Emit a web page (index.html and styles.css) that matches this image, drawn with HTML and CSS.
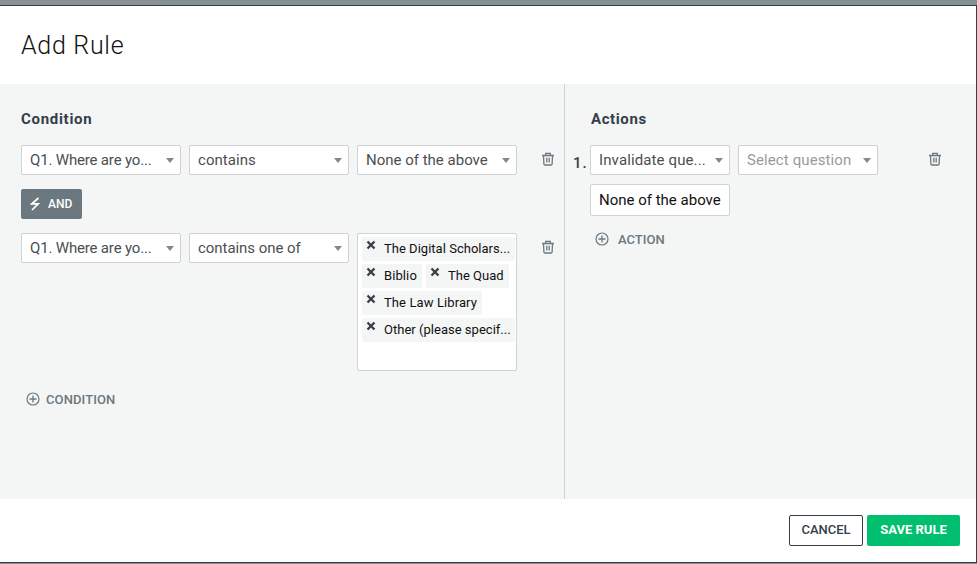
FILE: index.html
```html
<!DOCTYPE html>
<html lang="en">
<head>
<meta charset="utf-8">
<title>Add Rule</title>
<link rel="stylesheet" href="styles.css">
</head>
<body>
<svg class="symbols" width="0" height="0">
  <symbol id="trash" viewBox="0 0 14 14"><path d="M1 3.5H13M4.7 3.2V1.3H9.3V3.2M2.5 3.8L2.9 12Q3 13 4 13H10Q11 13 11.1 12L11.5 3.8M5.8 5.8V10.5M8.2 5.8V10.5" fill="none" stroke="currentColor" stroke-width="1.3"/></symbol>
  <symbol id="plus" viewBox="0 0 14 14"><path d="M7 3.5V10.5M3.5 7H10.5" fill="none" stroke="currentColor" stroke-width="1.3"/><circle cx="7" cy="7" r="6" fill="none" stroke="currentColor" stroke-width="1.2"/></symbol>
  <symbol id="cross" viewBox="0 0 10 10"><path d="M1.5 1.5L8.5 8.5M8.5 1.5L1.5 8.5" fill="none" stroke="currentColor" stroke-width="2.3"/></symbol>
</svg>
<div class="backdrop"><div class="backdrop-side"></div></div>
<div class="dialog">
  <header class="header"><h1 class="title">Add Rule</h1></header>
  <main class="body">
    <section class="conditions">
      <h2 class="heading"><span class="t-condition">Condition</span></h2>
      <div class="row">
        <div class="select"><span class="t-where">Q1. Where are yo...</span><i class="caret"></i></div>
        <div class="select"><span class="t-contains">contains</span><i class="caret"></i></div>
        <div class="select"><span class="t-none">None of the above</span><i class="caret"></i></div>
        <svg class="trash"><use href="#trash"/></svg>
      </div>
      <button class="and"><svg class="bolt" viewBox="0 0 10 14"><path d="M8.5 1L1.8 6.8H8.2L2 13" fill="none" stroke="currentColor" stroke-width="1.7"/></svg><span class="t-and">AND</span></button>
      <div class="row">
        <div class="select"><span class="t-where">Q1. Where are yo...</span><i class="caret"></i></div>
        <div class="select"><span class="t-oneof">contains one of</span><i class="caret"></i></div>
        <div class="multi">
          <div class="tag tag-full"><svg class="cross"><use href="#cross"/></svg><span class="t-digital">The Digital Scholars...</span></div>
          <div class="tag tag-biblio"><svg class="cross"><use href="#cross"/></svg><span class="t-biblio">Biblio</span></div>
          <div class="tag tag-quad"><svg class="cross"><use href="#cross"/></svg><span class="t-quad">The Quad</span></div>
          <div class="tag tag-law"><svg class="cross"><use href="#cross"/></svg><span class="t-law">The Law Library</span></div>
          <div class="tag tag-full"><svg class="cross"><use href="#cross"/></svg><span class="t-other">Other (please specif...</span></div>
        </div>
        <svg class="trash"><use href="#trash"/></svg>
      </div>
      <button class="add"><svg class="plus"><use href="#plus"/></svg><span class="t-addcond">CONDITION</span></button>
    </section>
    <section class="actions">
      <h2 class="heading"><span class="t-actions">Actions</span></h2>
      <div class="action">
        <span class="number">1.</span>
        <div class="fields">
          <div class="row">
            <div class="select short"><span class="t-invalidate">Invalidate que...</span><i class="caret"></i></div>
            <div class="select short placeholder"><span class="t-select">Select question</span><i class="caret"></i></div>
            <svg class="trash trash-action"><use href="#trash"/></svg>
          </div>
          <div class="value"><span class="t-value">None of the above</span></div>
          <button class="add add-action"><svg class="plus"><use href="#plus"/></svg><span class="t-addact">ACTION</span></button>
        </div>
      </div>
    </section>
  </main>
  <footer class="footer">
    <button class="cancel"><span class="t-cancel">CANCEL</span></button>
    <button class="save"><span class="t-save">SAVE RULE</span></button>
  </footer>
</div>
</body>
</html>
```
FILE: styles.css
```css
* { box-sizing: border-box; }
body { margin: 0; width: 977px; height: 564px; overflow: hidden; background: #849093; font-family: Roboto, sans-serif; font-size: 15px; color: #4b4f52; }
button { font: inherit; border: 0; background: none; padding: 0; display: flex; align-items: center; }
span { white-space: nowrap; }
svg { display: block; flex: none; }
.symbols { display: none; }
.backdrop { height: 5px; }
.backdrop-side { width: 160px; height: 5px; background: #8a8f98; }
.dialog { height: 558px; border: 1px solid #333e48; border-left: 0; background: #fff; }
.header { height: 78px; padding: 23px 0 0 21px; }
.title { margin: 0; font-size: 25px; line-height: 34px; font-weight: 300; color: #111; letter-spacing: 0.7px; }
.body { display: flex; height: 415px; background: #f4f5f5; }
.conditions { width: 565px; border-right: 1px solid #d0d2d3; padding: 25px 0 0 21px; }
.actions { flex: 1; padding: 25px 0 0 8px; }
.heading { margin: 0 0 16px; font-size: 15px; line-height: 20px; font-weight: 700; color: #333e48; }
.actions .heading { padding-left: 18px; }
.row { display: flex; gap: 8px; }
.select { width: 160px; height: 30px; display: flex; align-items: center; justify-content: space-between; padding: 0 6px 0 8px; background: #fff; border: 1px solid #d0d2d3; border-radius: 2px; }
.select.short { width: 140px; }
.placeholder { color: #999b9b; }
.caret { border: 4px solid transparent; border-top: 5px solid #888; border-bottom: 0; }
.trash { width: 14px; height: 14px; margin: 7px 0 0 16px; color: #6b787f; }
.trash-action { margin-left: 42px; }
.and { width: 61px; height: 30px; margin: 14px 0; padding-left: 9px; gap: 8px; border-radius: 2px; background: #6b787f; color: #fff; font-size: 12px; font-weight: 500; }
.bolt { width: 10px; height: 14px; }
.multi { width: 160px; height: 138px; padding: 3px 1px 0 4px; display: flex; flex-wrap: wrap; align-content: flex-start; gap: 3px 4px; background: #fff; border: 1px solid #d0d2d3; border-radius: 2px; }
.tag { height: 24px; display: flex; padding: 3px 0 0 4px; gap: 8px; background: #f4f5f5; border-radius: 2px; font-size: 13px; line-height: 18px; color: #111; }
.tag-full { width: 153px; }
.tag-biblio { width: 60px; }
.tag-quad { width: 83px; }
.tag-law { width: 120px; }
.cross { width: 10px; height: 10px; color: #333e48; }
.add { margin: 19px 0 0 5px; height: 18px; gap: 6px; font-size: 13px; font-weight: 500; color: #6b787f; }
.plus { width: 14px; height: 14px; }
.action { display: flex; }
.number { width: 17px; padding-top: 8px; line-height: 20px; font-size: 15px; font-weight: 500; color: #333e48; letter-spacing: 1px; }
.value { width: 140px; height: 32px; margin-top: 9px; padding-left: 8px; display: flex; align-items: center; background: #fff; border: 1px solid #d0d2d3; border-radius: 2px; color: #111; }
.add-action { margin-top: 14px; gap: 9px; }
.footer { display: flex; gap: 4px; padding: 16px 16px 0 0; justify-content: flex-end; }
.cancel, .save { height: 31px; padding-bottom: 2px; justify-content: center; font-size: 13px; border-radius: 2px; }
.cancel { width: 74px; border: 1px solid #333e48; color: #333e48; font-weight: 500; }
.save { width: 93px; background: #00bf6f; color: #fff; font-weight: 700; }
.t-condition { letter-spacing: 0.7px; }
.t-actions { letter-spacing: 0.6px; }
.t-where { letter-spacing: -0.17px; }
.t-contains { letter-spacing: 0.05px; }
.t-oneof { letter-spacing: -0.05px; }
.t-none, .t-value { letter-spacing: 0; }
.t-invalidate { letter-spacing: 0.12px; }
.t-select { letter-spacing: 0.1px; }
.t-digital, .t-other { letter-spacing: 0.02px; }
.t-quad { letter-spacing: 0; }
.t-law, .t-biblio { letter-spacing: 0.1px; }
.t-addcond { letter-spacing: 0.1px; }
```
